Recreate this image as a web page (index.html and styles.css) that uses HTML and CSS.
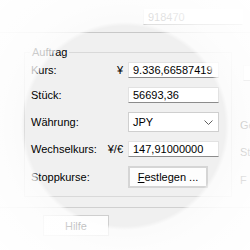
FILE: index.html
```html
<!DOCTYPE html>
<html lang="de">
<head>
    <meta charset="UTF-8">
    <meta name="viewport" content="width=device-width, initial-scale=1.0">
    <title>Auftrag</title>
    <link rel="stylesheet" href="styles.css">
</head>
<body>
    <div class="dialog">
        <div class="top-row">
            <div class="field top-field">918470</div>
        </div>

        <div class="main">
            <fieldset class="group">
                <legend>Auftrag</legend>
                <div class="form-grid">
                    <span class="label">Kurs:</span>
                    <span class="unit">&yen;</span>
                    <div class="field">9.336,66587419</div>

                    <span class="label">Stück:</span>
                    <span class="unit"></span>
                    <div class="field">56693,36</div>

                    <span class="label">Währung:</span>
                    <span class="unit"></span>
                    <div class="combo">
                        <span>JPY</span>
                        <svg class="chevron" width="9" height="5" viewBox="0 0 9 5">
                            <path d="M0.5 0.5 L4.5 4.5 L8.5 0.5" fill="none" stroke="#606060" stroke-width="1"/>
                        </svg>
                    </div>

                    <span class="label">Wechselkurs:</span>
                    <span class="unit">&yen;/&euro;</span>
                    <div class="field">147,91000000</div>

                    <span class="label">Stoppkurse:</span>
                    <span class="unit"></span>
                    <div><button class="btn"><u>F</u>estlegen ...</button></div>
                </div>
            </fieldset>

            <div class="side">
                <div class="field side-field"></div>
                <span></span>
                <span class="label">Ge</span>
                <span class="label">St</span>
                <span class="label">F</span>
            </div>
        </div>

        <div class="footer">
            <button class="btn help-btn">Hilfe</button>
        </div>
    </div>

    <!-- magnifier: everything outside the lens is washed out -->
    <div class="lens"></div>
</body>
</html>
```

FILE: styles.css
```css
body {
    margin: 0;
    width: 250px;
    height: 250px;
    overflow: hidden;
    background-color: #f0f0f0;
    font-family: "Liberation Sans", Arial, sans-serif;
    font-size: 11px;
    color: #000;
    position: relative;
}
.dialog {
    width: 250px;
}
.top-row {
    height: 33px;
    box-sizing: border-box;
    padding: 9px 0 0 143px;
    border-bottom: 1px solid #c8c8c8;
}
.field {
    height: 16px;
    box-sizing: border-box;
    background: #fff;
    border: 1px solid #e2e2e2;
    border-bottom-color: #8c8c8c;
    padding-left: 4px;
    line-height: 14px;
    white-space: nowrap;
    overflow: hidden;
}
.top-field {
    width: 100px;
    color: #6d6d6d;
    border-top-color: #fff;
    border-right-color: #fff;
}
.main {
    display: flex;
    gap: 8px;
    padding: 12px 0 0 24px;
}
.group {
    margin: 0;
    padding: 0 0 8px 0;
    width: 208px;
    box-sizing: border-box;
    border: 1px solid #d9d9d9;
    flex-shrink: 0;
}
.group legend {
    margin-left: 5px;
    padding: 0 2px;
    line-height: 14px;
}
.form-grid {
    display: grid;
    grid-template-columns: 67px 30px 91px;
    grid-template-rows: 16px 16px 20px 16px 22px;
    row-gap: 9px;
    align-items: center;
    padding: 3px 0 0 6px;
}
.unit {
    text-align: right;
    padding-right: 5px;
}
.combo {
    height: 20px;
    box-sizing: border-box;
    background: #fff;
    border: 1px solid #cfcfcf;
    display: flex;
    align-items: center;
    justify-content: space-between;
    padding: 0 5px 0 4px;
}
.chevron {
    display: block;
}
.btn {
    height: 22px;
    width: 80px;
    margin: 0;
    padding: 0;
    font-family: inherit;
    font-size: 11px;
    color: #000;
    background: #fdfdfd;
    border: 2px solid #d5d5d5;
    border-radius: 0;
}
.side {
    display: grid;
    grid-template-rows: 16px 16px 20px 16px 22px;
    row-gap: 9px;
    align-items: center;
    padding-top: 20px;
    flex-shrink: 0;
    width: 10px;
    overflow: hidden;
}
.side-field {
    margin-left: 3px;
    width: 20px;
}
.footer {
    margin-top: 10px;
    border-top: 1px solid #d0d0d0;
    padding: 7px 0 0 43px;
}
.help-btn {
    width: 66px;
    height: 21px;
    border-width: 1px;
    border-color: #cfcfcf;
}
.lens {
    position: absolute;
    inset: 0;
    pointer-events: none;
    background: radial-gradient(circle at 125px 126px,
        rgba(255, 255, 255, 0) 100px,
        rgba(255, 255, 255, 0.72) 104px,
        rgba(255, 255, 255, 0.86) 125px,
        rgba(255, 255, 255, 0.97) 170px);
}
```
